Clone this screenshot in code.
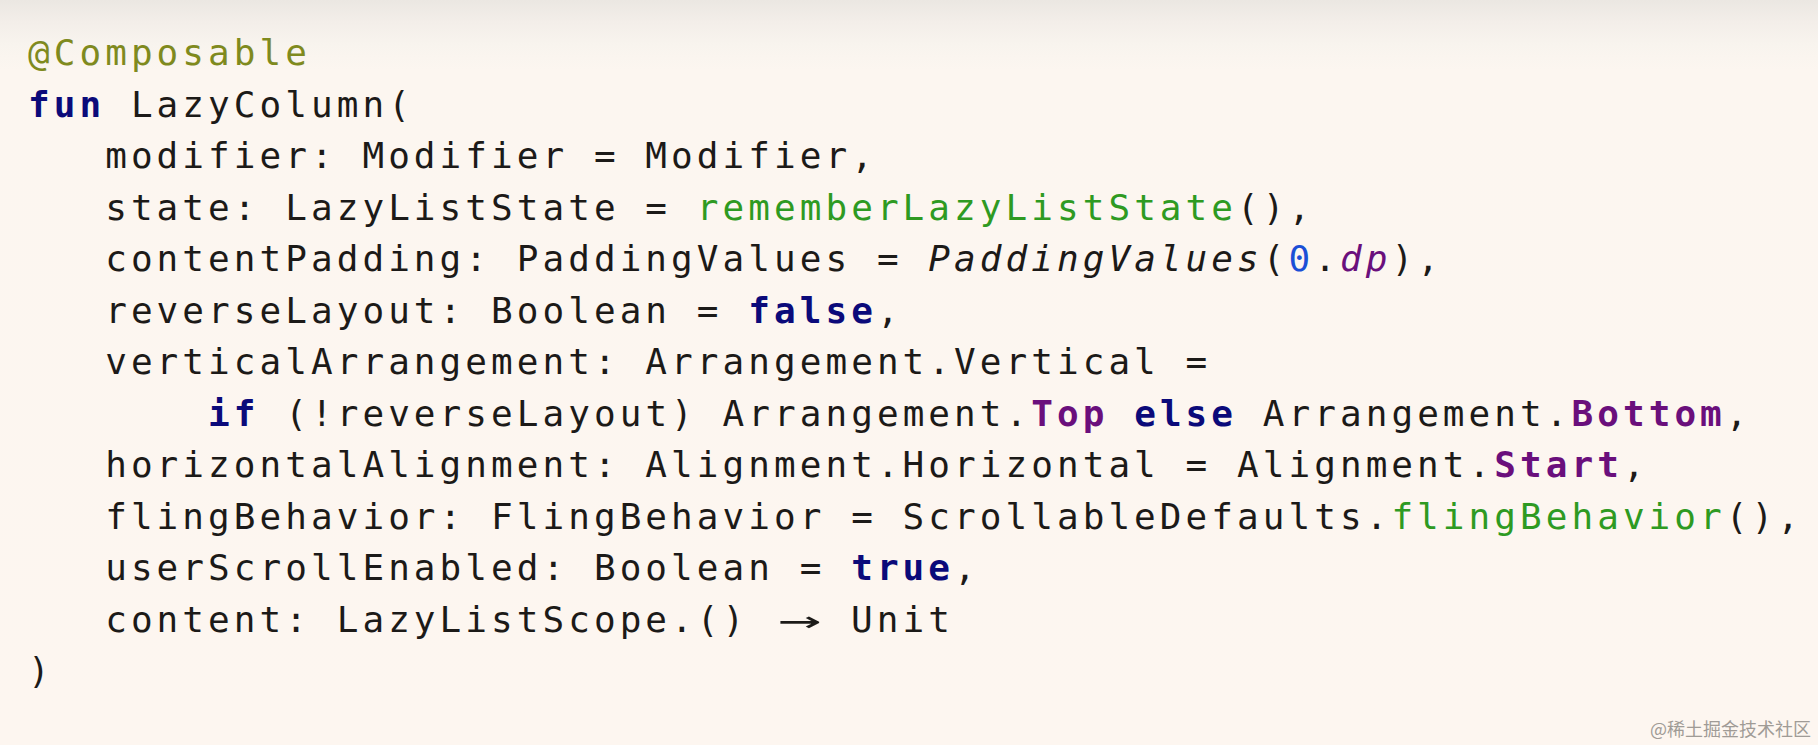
import React from "react";

const KW = "text-[#0b0a7a] font-bold";
const PURPLE = "text-[#6a0f7c] font-bold";
const GREEN = "text-[#2e9a22]";

function Arrow() {
  return (
    <span className="inline-block w-[51.4px] text-center tracking-normal">
      <span className="inline-block scale-x-[2]">→</span>
    </span>
  );
}

export default function App() {
  return (
    <div className="relative w-[1818px] h-[745px] overflow-hidden bg-[linear-gradient(to_bottom,#ebe7e2_0px,#f3eee9_22px,#f8f4ee_45px,#fcf6f0_70px,#fdf6f0_100%)]">
      <div
        className="pl-[28px] pt-[27px] text-[36px] leading-[51.5px] tracking-[4.05px] text-[#1c1a18] whitespace-pre"
        style={{ fontFamily: '"DejaVu Sans Mono", "Liberation Mono", monospace' }}
      >
        <div className="text-[#7f8a1e]">@Composable</div>
        <div>
          <span className={KW}>fun</span> LazyColumn(
        </div>
        <div>{"   modifier: Modifier = Modifier,"}</div>
        <div>
          {"   state: LazyListState = "}
          <span className={GREEN}>rememberLazyListState</span>(),
        </div>
        <div>
          {"   contentPadding: PaddingValues = "}
          <span className="italic">PaddingValues</span>(
          <span className="text-[#1b4fd6]">0</span>.
          <span className="italic text-[#6a0f7c]">dp</span>),
        </div>
        <div>
          {"   reverseLayout: Boolean = "}
          <span className={KW}>false</span>,
        </div>
        <div>{"   verticalArrangement: Arrangement.Vertical ="}</div>
        <div>
          {"       "}
          <span className={KW}>if</span>
          {" (!reverseLayout) Arrangement."}
          <span className={PURPLE}>Top</span> <span className={KW}>else</span>
          {" Arrangement."}
          <span className={PURPLE}>Bottom</span>,
        </div>
        <div>
          {"   horizontalAlignment: Alignment.Horizontal = Alignment."}
          <span className={PURPLE}>Start</span>,
        </div>
        <div>
          {"   flingBehavior: FlingBehavior = ScrollableDefaults."}
          <span className={GREEN}>flingBehavior</span>(),
        </div>
        <div>
          {"   userScrollEnabled: Boolean = "}
          <span className={KW}>true</span>,
        </div>
        <div>
          {"   content: LazyListScope.() "}
          <Arrow />
          {" Unit"}
        </div>
        <div>)</div>
      </div>
      <div
        className="absolute right-[7px] bottom-[6px] text-[18px] leading-[22px] text-[#a09b96]"
        style={{ fontFamily: '"Noto Sans CJK SC", "Noto Sans", sans-serif' }}
      >
        @稀土掘金技术社区
      </div>
    </div>
  );
}
